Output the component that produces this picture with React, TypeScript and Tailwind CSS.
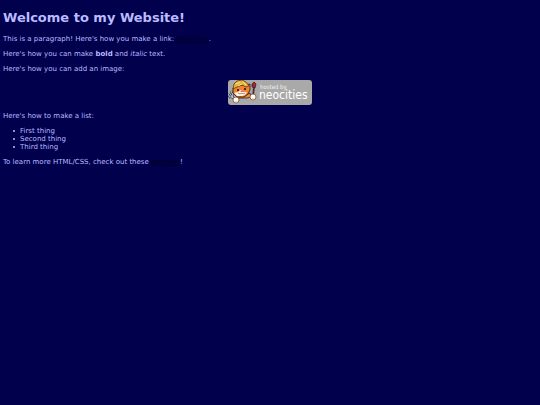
const things = ['First thing', 'Second thing', 'Third thing'];

function NeocitiesBadge() {
	return (
		<svg viewBox="0 0 84 25" className="h-[25px] w-[84px]" role="img" aria-label="Hosted by Neocities">
			<rect width="84" height="25" rx="3" fill="#a9a9a9" />
			{/* Fork */}
			<path d="M0 14l2 3 3 0M3 11l2 4-1 3M2 14l5 6" fill="none" stroke="#30343c" strokeWidth="2.4" />
			<path d="M0 14l2 3 3 0M3 11l2 4-1 3M2 14l5 6" fill="none" stroke="#b3bfd4" strokeWidth="1.1" />
			{/* Body */}
			<path d="M10 15l8 0 4-2 1 4-4 1-9 0z" fill="#f08a32" stroke="#3b2114" strokeWidth=".8" />
			{/* Cat head */}
			<path d="M5 8l3-2 10-1 4-1 0 6-2 4-4 3-7 0-4-4z" fill="#ee8434" stroke="#3b2114" strokeWidth=".9" />
			<path d="M6 13l4-1 3-2 2 2 4 0-2 3-3 1-5 0z" fill="#fff3e4" />
			{/* Helmet */}
			<path d="M5 9l1-5 3-3 5-1 4 2 3 4-3 1-4-2-5 2z" fill="#eab53c" stroke="#5c3a10" strokeWidth=".8" />
			<path d="M8 4l4-2M10 6l4-2M15 2l3 3" fill="none" stroke="#ffe78a" strokeWidth=".9" />
			<path d="M10 9v2M17 8v2" stroke="#24150f" strokeWidth="1.6" />
			<path d="M12 11h3l-1 1z" fill="#b33a34" />
			<path d="M10 13l2 1 2-1 1 1 2-1" fill="none" stroke="#7a4230" strokeWidth=".6" />
			{/* Brush */}
			<path d="M26 7l-1 9" stroke="#4a2c30" strokeWidth="1.8" />
			<path d="M26 2l2 2-1 4-3-1 0-3z" fill="#a02a36" stroke="#3a1219" strokeWidth=".7" />
			{/* Paws */}
			<circle cx="8" cy="20" r="3" fill="#fff" stroke="#7a5030" strokeWidth=".8" />
			<circle cx="25" cy="17" r="3" fill="#fff" stroke="#7a5030" strokeWidth=".8" />
			<path d="M6 22l4 0M24 19l3 0" stroke="#e8a05c" strokeWidth=".8" />
			<text x="32" y="9" fill="#f0f0f0" fontSize="6" className="font-['DejaVu_Sans_Condensed','DejaVu_Sans',sans-serif]">hosted by</text>
			<text x="31" y="19" fill="#fff" fontSize="12" className="font-['DejaVu_Sans_Condensed','DejaVu_Sans',sans-serif]">neocities</text>
		</svg>
	);
}

export default function App() {
	return (
		<main className="min-h-screen bg-[#00004d] px-[3px] pt-[10px] font-['DejaVu_Sans',sans-serif] text-[7px] leading-[8px] text-[#bbbbff]">
			<h1 className="mb-[9px] text-[13px] leading-[16px] font-bold">Welcome to my Website!</h1>

			<div className="flex flex-col gap-[7px]">
				<p>
					This is a paragraph! Here's how you make a link:{' '}
					<a href="https://neocities.org" className="text-[#000022] underline">Neocities</a>.
				</p>

				<p>
					Here's how you can make <strong>bold</strong> and <em>italic</em> text.
				</p>

				<p>Here's how you can add an image:</p>

				<div className="flex justify-center">
					<NeocitiesBadge />
				</div>

				<p>Here's how to make a list:</p>

				<ul className="pl-[10px]">
					{things.map((thing) => (
						<li key={thing} className="flex items-center gap-[5px] before:size-[2px] before:rounded-full before:bg-[#bbbbff]">
							{thing}
						</li>
					))}
				</ul>

				<p>
					To learn more HTML/CSS, check out these{' '}
					<a href="https://neocities.org/tutorials" className="text-[#000022] underline">tutorials</a>!
				</p>
			</div>
		</main>
	);
}
